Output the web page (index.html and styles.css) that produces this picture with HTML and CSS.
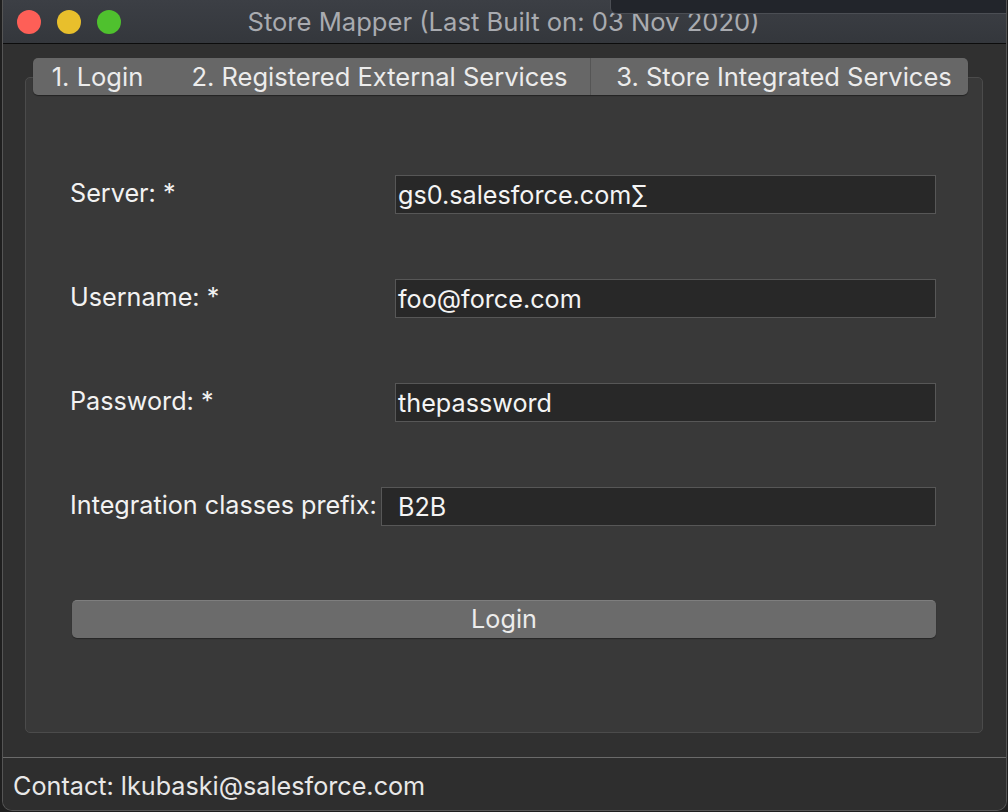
FILE: index.html
```html
<!DOCTYPE html>
<html>
<head>
<meta charset="utf-8">
<link rel="stylesheet" href="styles.css">
</head>
<body>
<div class="window">
  <div class="titlebar">
    <div class="lights">
      <span class="light red"></span>
      <span class="light yellow"></span>
      <span class="light green"></span>
    </div>
    <div class="title">Store Mapper (Last Built on: 03 Nov 2020)</div>
  </div>
  <div class="main">
    <div class="tabbar">
      <div class="tab tab1">1. Login</div>
      <div class="tab tab2">2. Registered External Services</div>
      <div class="tab tab3 sep">3. Store Integrated Services</div>
    </div>
    <div class="panel">
      <div class="row">
        <div class="label">Server: *</div>
        <div class="input">gs0.salesforce.com∑</div>
      </div>
      <div class="row">
        <div class="label">Username: *</div>
        <div class="input">foo@force.com</div>
      </div>
      <div class="row">
        <div class="label">Password: *</div>
        <div class="input">thepassword</div>
      </div>
      <div class="row">
        <div class="label label-short">Integration classes prefix:</div>
        <div class="input input-indent">B2B</div>
      </div>
      <div class="button">Login</div>
    </div>
  </div>
  <div class="footer">Contact: lkubaski@salesforce.com</div>
  <div class="overlay"></div>
</div>
</body>
</html>
```

FILE: styles.css
```css
html, body {
  margin: 0;
  padding: 0;
  background: #1f1f1f;
  width: 1008px;
  height: 812px;
  overflow: hidden;
}
body {
  font-family: Inter, "Open Sans", sans-serif;
}
.window {
  position: relative;
  margin-left: 2px;
  width: 1003px;
  height: 810px;
  border: 1px solid #555;
  border-top: none;
  border-radius: 0 0 10px 10px;
  background: #303030;
  display: flex;
  flex-direction: column;
  overflow: hidden;
}
.titlebar {
  height: 43px;
  flex: none;
  background: linear-gradient(#3c3f45, #34373c);
  border-bottom: 1px solid #0c0c0c;
  display: flex;
  align-items: center;
  position: relative;
}
.lights {
  display: flex;
  gap: 16px;
  padding-left: 14px;
}
.light {
  width: 24px;
  height: 24px;
  border-radius: 50%;
  display: block;
}
.red { background: #fe5f57; }
.yellow { background: #e8bf2c; }
.green { background: #4fc12e; }
.title {
  position: absolute;
  left: 0;
  right: 0;
  text-align: center;
  color: #a9abb0;
  font-size: 25.6px;
  padding-right: 2px;
}
.main {
  flex: 1;
  padding: 14px 22px 0 22px;
  display: flex;
  flex-direction: column;
}
.tabbar {
  position: relative;
  z-index: 1;
  margin-left: 8px;
  width: 935px;
  height: 37px;
  background: #676767;
  border-radius: 5px;
  box-shadow: 0 1px 1px rgba(0,0,0,0.4);
  display: flex;
}
.tab {
  color: #ececec;
  font-size: 25.5px;
  line-height: 37px;
  text-align: center;
  box-sizing: border-box;
  white-space: nowrap;
}
.tab1 { width: 129px; }
.tab2 { width: 428px; padding-left: 7px; }
.tab3 { width: 378px; padding-left: 9px; }
.sep { border-left: 1px solid #555; }
.panel {
  margin-top: -18px;
  width: 958px;
  height: 656px;
  border: 1px solid #4b4b4b;
  border-radius: 5px;
  background: #393939;
  box-sizing: border-box;
  padding: 97px 45px 0 44px;
  display: flex;
  flex-direction: column;
}
.row {
  display: flex;
  align-items: center;
  height: 39px;
  margin-bottom: 65px;
}
.label {
  width: 325px;
  flex: none;
  color: #f2f2f2;
  font-size: 25.2px;
  padding-bottom: 3px;
  white-space: nowrap;
}
.label-short { width: 311px; }
.input {
  flex: 1;
  margin-right: 1px;
  height: 39px;
  box-sizing: border-box;
  background: #282828;
  border: 1px solid #575757;
  color: #f4f4f4;
  font-size: 25.2px;
  line-height: 39px;
  padding-left: 2px;
  white-space: nowrap;
}
.input-indent { padding-left: 16px; }
.button {
  margin-left: 2px;
  margin-right: 1px;
  margin-top: 9px;
  height: 38px;
  box-sizing: border-box;
  background: #6b6b6b;
  border-top: 1px solid #7e7e7e;
  border-radius: 5px;
  box-shadow: 0 1px 1px rgba(0,0,0,0.35);
  color: #ececec;
  font-size: 25.2px;
  line-height: 36px;
  text-align: center;
}
.footer {
  flex: none;
  height: 52px;
  border-top: 1px solid #6a6a6a;
  background: #2e2e2e;
  color: #e8e8e8;
  font-size: 25.2px;
  padding-left: 10px;
  line-height: 56px;
}
.overlay {
  position: absolute;
  top: -1px;
  right: -2px;
  width: 396px;
  height: 13px;
  background: #22252b;
  border: 1px solid #4b4e54;
  border-radius: 0 0 0 6px;
}
```
